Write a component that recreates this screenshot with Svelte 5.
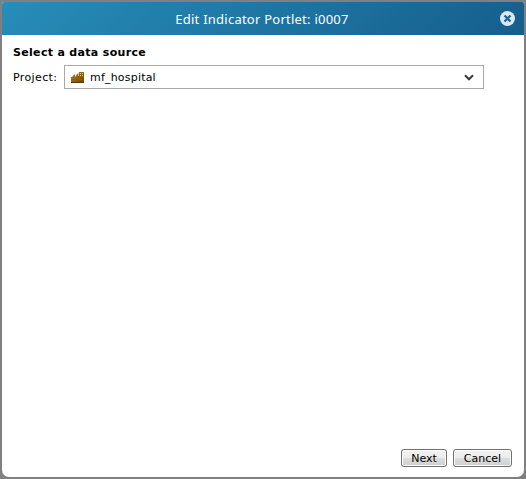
<script>
  const title = 'Edit Indicator Portlet: i0007';
  const project = 'mf_hospital';
</script>

<div class="backdrop">
  <section class="dialog">
    <header>
      <span class="title">{title}</span>
      <button class="close" aria-label="Close">
        <svg width="15" height="15" viewBox="0 0 15 15">
          <circle cx="7.5" cy="7.5" r="7.5" fill="#dce8f1" />
          <path d="M5.3 5.3l4.4 4.4M9.7 5.3l-4.4 4.4" stroke="#1c6795" stroke-width="2.3" stroke-linecap="square" />
        </svg>
      </button>
    </header>
    <main>
      <h2>Select a data source</h2>
      <div class="field">
        <span class="label">Project:</span>
        <div class="select">
          <svg class="factory" width="13" height="11" viewBox="0 0 13 11">
            <defs>
              <linearGradient id="brass" x1="0" y1="0" x2="1" y2="1">
                <stop offset="0" stop-color="#b8841e" />
                <stop offset="1" stop-color="#6b4405" />
              </linearGradient>
            </defs>
            <path d="M0 11V5H1L3 2.5H4V5L6.5 1.5H7.5V4H8V0H13V11Z" fill="url(#brass)" />
            <path d="M0 10.5H13" stroke="#573704" />
            <path d="M9 1h1v1H9zM11 1h1v1h-1zM9 3h1v1H9zM11 3h1v1h-1z" fill="#e3c684" />
            <path d="M1 7.5H12" stroke="#8c5d0d" />
          </svg>
          <span class="value">{project}</span>
          <svg class="chevron" width="10" height="7" viewBox="0 0 10 7">
            <path d="M1 1.2L5 5.2L9 1.2" fill="none" stroke="#3c3c3c" stroke-width="2.1" />
          </svg>
        </div>
      </div>
    </main>
    <footer>
      <button class="btn next">Next</button>
      <button class="btn cancel">Cancel</button>
    </footer>
  </section>
</div>

<style>
  .backdrop {
    box-sizing: border-box;
    width: 526px;
    height: 479px;
    padding: 2px;
    background: #808080;
    font: 11px/14px 'DejaVu Sans', sans-serif;
    color: #000;
  }
  .dialog {
    display: flex;
    flex-direction: column;
    height: 475px;
    overflow: hidden;
    background: #fff;
    border-radius: 2px 2px 7px 7px;
  }
  header {
    display: flex;
    align-items: center;
    height: 33px;
    flex: none;
    padding: 0 9px 0 22px;
    background: linear-gradient(135deg, #288db9 0%, #155e8c 100%);
  }
  .title {
    flex: 1;
    text-align: center;
    font: 13px/18px 'Noto Sans', sans-serif;
    letter-spacing: 0.24px;
    color: #fff;
    white-space: nowrap;
  }
  .close {
    display: flex;
    padding: 0;
    border: 0;
    background: none;
  }
  main {
    flex: 1;
    padding: 11px 11px 10px;
  }
  h2 {
    margin: 0;
    font-size: 11px;
    line-height: 14px;
    font-weight: bold;
    letter-spacing: 0.32px;
  }
  .field {
    display: flex;
    align-items: center;
    margin-top: 5px;
  }
  .label {
    width: 51px;
    padding-top: 2px;
    letter-spacing: 0.38px;
    white-space: nowrap;
  }
  .select {
    box-sizing: border-box;
    display: flex;
    align-items: center;
    width: 420px;
    height: 24px;
    padding: 0 9px 0 6px;
    border: 1px solid #a9a9a9;
  }
  .value {
    flex: 1;
    margin-left: 6px;
    padding-top: 2px;
    letter-spacing: 0.2px;
  }
  footer {
    display: flex;
    justify-content: flex-end;
    gap: 6px;
    padding: 0 12px 10px 0;
  }
  .btn {
    box-sizing: border-box;
    height: 18px;
    padding: 1px 0 0;
    border: 1px solid #707070;
    border-radius: 3px;
    background: linear-gradient(#f2f2f2 0%, #ebebeb 48%, #dddddd 52%, #cfcfcf 100%);
    box-shadow: inset 0 0 0 1px #fcfcfc;
    font: 11px/15px 'DejaVu Sans', sans-serif;
    color: #000;
  }
  .next { width: 46px; }
  .cancel { width: 59px; }
</style>
